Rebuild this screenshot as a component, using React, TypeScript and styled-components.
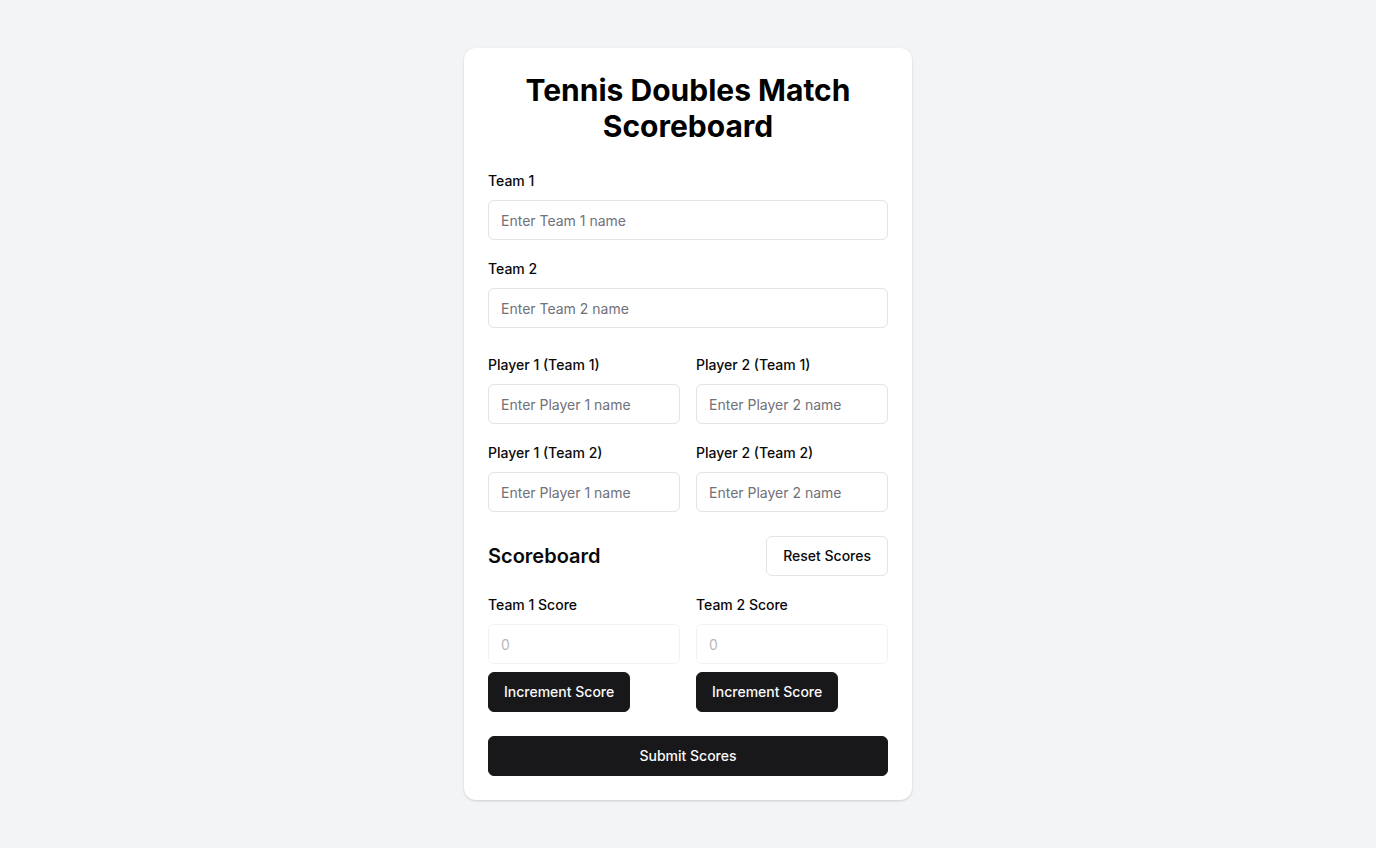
import * as React from "react";
import styled, { createGlobalStyle } from "styled-components";

const GlobalStyle = createGlobalStyle`
  * { box-sizing: border-box; }
  html, body {
    margin: 0;
    padding: 0;
    background: #f3f4f6;
    font-family: Inter, "Liberation Sans", sans-serif;
    color: #09090b;
  }
`;

const Page = styled.div`
  min-height: 848px;
  display: flex;
  justify-content: center;
  align-items: flex-start;
  padding-top: 48px;
`;

const Card = styled.div`
  width: 448px;
  background: #fff;
  border-radius: 12px;
  box-shadow: 0 1px 3px rgba(0, 0, 0, 0.1), 0 1px 2px rgba(0, 0, 0, 0.06);
  padding: 24px;
  display: flex;
  flex-direction: column;
`;

const Title = styled.h1`
  margin: 0 0 26px;
  font-size: 30px;
  line-height: 36px;
  font-weight: 700;
  text-align: center;
  color: #000;
`;

const Field = styled.div<{ $gapAfter?: number }>`
  display: flex;
  flex-direction: column;
  gap: 9px;
  margin-bottom: ${(p) => p.$gapAfter ?? 18}px;
`;

const Label = styled.label`
  padding-top: 1px;
  font-size: 14px;
  line-height: 20px;
  font-weight: 500;
  color: #09090b;
`;

const Input = styled.input`
  height: 40px;
  width: 100%;
  border: 1px solid #e4e4e7;
  border-radius: 6px;
  padding: 0 12px;
  font-family: inherit;
  font-size: 14px;
  color: #09090b;
  background: #fff;
  outline: none;
  &::placeholder { color: #71717a; }
  &:disabled { opacity: 0.5; cursor: not-allowed; }
`;

const Grid = styled.div<{ $gapAfter?: number }>`
  display: grid;
  grid-template-columns: 1fr 1fr;
  column-gap: 16px;
  margin-bottom: ${(p) => p.$gapAfter ?? 0}px;
`;

const HeaderRow = styled.div`
  display: flex;
  justify-content: space-between;
  align-items: center;
  height: 40px;
  margin-bottom: 18px;
`;

const SectionTitle = styled.h2`
  margin: 0;
  font-size: 20px;
  line-height: 28px;
  font-weight: 600;
  color: #09090b;
`;

const Button = styled.button<{ $variant?: "outline" | "solid"; $full?: boolean }>`
  height: 40px;
  padding: 0 ${(p) => (p.$variant === "outline" ? 16 : 15)}px 1px;
  border-radius: 6px;
  font-family: inherit;
  font-size: 14px;
  font-weight: 500;
  cursor: pointer;
  width: ${(p) => (p.$full ? "100%" : "auto")};
  background: ${(p) => (p.$variant === "outline" ? "#fff" : "#18181b")};
  color: ${(p) => (p.$variant === "outline" ? "#09090b" : "#fafafa")};
  border: 1px solid ${(p) => (p.$variant === "outline" ? "#e4e4e7" : "#18181b")};
`;

const ScoreColumn = styled.div`
  display: flex;
  flex-direction: column;
  align-items: flex-start;
  gap: 8px;
`;

const ScoreField = styled(Field)`
  width: 100%;
  margin-bottom: 0;
`;

const Actions = styled.div`
  margin-top: 24px;
`;

export default function App() {
  const [score1, setScore1] = React.useState(0);
  const [score2, setScore2] = React.useState(0);

  return (
    <>
      <GlobalStyle />
      <Page>
        <Card>
          <Title>Tennis Doubles Match Scoreboard</Title>

          <Field>
            <Label>Team 1</Label>
            <Input placeholder="Enter Team 1 name" />
          </Field>
          <Field $gapAfter={26}>
            <Label>Team 2</Label>
            <Input placeholder="Enter Team 2 name" />
          </Field>

          <Grid>
            <Field>
              <Label>Player 1 (Team 1)</Label>
              <Input placeholder="Enter Player 1 name" />
            </Field>
            <Field>
              <Label>Player 2 (Team 1)</Label>
              <Input placeholder="Enter Player 2 name" />
            </Field>
          </Grid>
          <Grid $gapAfter={24}>
            <Field $gapAfter={0}>
              <Label>Player 1 (Team 2)</Label>
              <Input placeholder="Enter Player 1 name" />
            </Field>
            <Field $gapAfter={0}>
              <Label>Player 2 (Team 2)</Label>
              <Input placeholder="Enter Player 2 name" />
            </Field>
          </Grid>

          <HeaderRow>
            <SectionTitle>Scoreboard</SectionTitle>
            <Button
              $variant="outline"
              onClick={() => {
                setScore1(0);
                setScore2(0);
              }}
            >
              Reset Scores
            </Button>
          </HeaderRow>

          <Grid>
            <ScoreColumn>
              <ScoreField>
                <Label>Team 1 Score</Label>
                <Input disabled placeholder={String(score1)} />
              </ScoreField>
              <Button onClick={() => setScore1(score1 + 1)}>Increment Score</Button>
            </ScoreColumn>
            <ScoreColumn>
              <ScoreField>
                <Label>Team 2 Score</Label>
                <Input disabled placeholder={String(score2)} />
              </ScoreField>
              <Button onClick={() => setScore2(score2 + 1)}>Increment Score</Button>
            </ScoreColumn>
          </Grid>

          <Actions>
            <Button $full>Submit Scores</Button>
          </Actions>
        </Card>
      </Page>
    </>
  );
}
